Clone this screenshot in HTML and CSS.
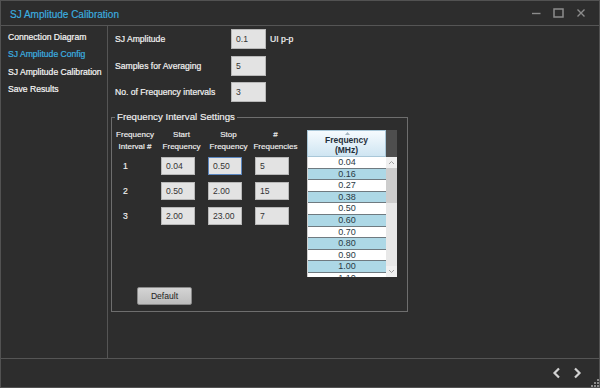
FILE: index.html
```html
<!DOCTYPE html>
<html>
<head>
<meta charset="utf-8">
<link rel="stylesheet" href="styles.css">
</head>
<body>
<div class="window">
  <header class="titlebar">
    <span class="title">SJ Amplitude Calibration</span>
    <div class="controls">
      <svg class="ctl" width="10" height="10" viewBox="0 0 10 10"><path d="M1 5.5H9.5" stroke="#8c8c8c" stroke-width="1.4"/></svg>
      <svg class="ctl" width="11" height="10" viewBox="0 0 11 10"><rect x="1" y="1" width="9" height="8" fill="none" stroke="#8c8c8c" stroke-width="1.5"/></svg>
      <svg class="ctl" width="10" height="10" viewBox="0 0 10 10"><path d="M1.5 1.5L8.5 8.5M8.5 1.5L1.5 8.5" stroke="#8c8c8c" stroke-width="1.4"/></svg>
    </div>
  </header>
  <div class="main">
    <nav class="nav">
      <div class="nav-item">Connection Diagram</div>
      <div class="nav-item active">SJ Amplitude Config</div>
      <div class="nav-item">SJ Amplitude Calibration</div>
      <div class="nav-item">Save Results</div>
    </nav>
    <section class="content">
      <div class="form-rows">
        <div class="form-row"><span class="label">SJ Amplitude</span><span class="field">0.1</span><span class="unit">UI p-p</span></div>
        <div class="form-row"><span class="label">Samples for Averaging</span><span class="field">5</span></div>
        <div class="form-row"><span class="label">No. of Frequency intervals</span><span class="field">3</span></div>
      </div>
      <fieldset class="group">
        <legend class="legend">Frequency Interval Settings</legend>
        <div class="group-body">
          <div class="intervals">
            <div class="ih">Frequency<br>Interval #</div>
            <div class="ih">Start<br>Frequency</div>
            <div class="ih">Stop<br>Frequency</div>
            <div class="ih">#<br>Frequencies</div>

            <div class="inum">1</div>
            <div class="icell"><span class="field small">0.04</span></div>
            <div class="icell"><span class="field small focus">0.50</span></div>
            <div class="icell"><span class="field small">5</span></div>

            <div class="inum">2</div>
            <div class="icell"><span class="field small">0.50</span></div>
            <div class="icell"><span class="field small">2.00</span></div>
            <div class="icell"><span class="field small">15</span></div>

            <div class="inum">3</div>
            <div class="icell"><span class="field small">2.00</span></div>
            <div class="icell"><span class="field small">23.00</span></div>
            <div class="icell"><span class="field small">7</span></div>
          </div>
          <div class="freq-table">
            <div class="th">
              <svg class="sort" width="5" height="3" viewBox="0 0 5 3"><path d="M0 3L2.5 0L5 3Z" fill="#a6b6c0"/></svg>
              Frequency<br>(MHz)
            </div>
            <div class="th-gap"></div>
            <div class="tbody">
              <div class="tr">0.04</div>
              <div class="tr alt">0.16</div>
              <div class="tr">0.27</div>
              <div class="tr alt">0.38</div>
              <div class="tr">0.50</div>
              <div class="tr alt">0.60</div>
              <div class="tr">0.70</div>
              <div class="tr alt">0.80</div>
              <div class="tr">0.90</div>
              <div class="tr alt">1.00</div>
              <div class="tr">1.10</div>
            </div>
            <div class="scrollbar">
              <div class="sb-btn"><svg width="7" height="5" viewBox="0 0 7 5"><path d="M1 4L3.5 1.5L6 4" fill="none" stroke="#a0a0a0" stroke-width="1"/></svg></div>
              <div class="sb-thumb"></div>
              <div class="sb-track"></div>
              <div class="sb-btn"><svg width="7" height="5" viewBox="0 0 7 5"><path d="M1 1L3.5 3.5L6 1" fill="none" stroke="#a0a0a0" stroke-width="1"/></svg></div>
            </div>
          </div>
        </div>
        <button class="btn">Default</button>
      </fieldset>
    </section>
  </div>
  <footer class="footer">
    <svg width="9" height="12" viewBox="0 0 9 12"><path d="M7 1.5L2.5 6L7 10.5" fill="none" stroke="#d2d2d2" stroke-width="2.2"/></svg>
    <svg width="9" height="12" viewBox="0 0 9 12"><path d="M2 1.5L6.5 6L2 10.5" fill="none" stroke="#d2d2d2" stroke-width="2.2"/></svg>
    <svg class="grip" width="9" height="9" viewBox="0 0 9 9">
      <rect x="7" y="1" width="2" height="2" fill="#8a8a8a"/>
      <rect x="4" y="4" width="2" height="2" fill="#8a8a8a"/><rect x="7" y="4" width="2" height="2" fill="#8a8a8a"/>
      <rect x="1" y="7" width="2" height="2" fill="#8a8a8a"/><rect x="4" y="7" width="2" height="2" fill="#8a8a8a"/><rect x="7" y="7" width="2" height="2" fill="#8a8a8a"/>
    </svg>
  </footer>
</div>
</body>
</html>
```
FILE: styles.css
```css
* { box-sizing: border-box; }
html, body { margin: 0; padding: 0; }
body {
  background: #2d2d2d;
  font-family: "Liberation Sans", Arial, sans-serif;
  color: #f2f2f2;
}
.window {
  width: 600px;
  height: 388px;
  border: 1px solid #525252;
  background: #2d2d2d;
  display: flex;
  flex-direction: column;
  position: relative;
}
.titlebar {
  height: 25px;
  flex: none;
  border-bottom: 1px solid #555;
  display: flex;
  align-items: center;
  justify-content: space-between;
  padding: 0 13px 0 9px;
}
.title {
  color: #3cb0e0;
  font-size: 10px;
  padding-top: 2px;
  -webkit-text-stroke: 0.15px #3cb0e0;
}
.controls {
  display: flex;
  align-items: center;
  gap: 12px;
}
.ctl { display: block; }
.main {
  flex: 1;
  display: flex;
  min-height: 0;
}
.nav {
  width: 107px;
  flex: none;
  border-right: 1px solid #555;
  padding: 3px 0 0 7px;
  font-size: 8.6px;
}
.nav-item {
  line-height: 17.4px;
  color: #f6f6f6;
  white-space: nowrap;
  -webkit-text-stroke: 0.2px currentColor;
}
.nav-item.active { color: #3cb0e0; }
.content {
  flex: 1;
  padding: 3px 0 0 3px;
  font-size: 8.6px;
}
.form-rows {
  display: flex;
  flex-direction: column;
  row-gap: 6.5px;
  padding-left: 4px;
  -webkit-text-stroke: 0.2px currentColor;
}
.form-row {
  display: flex;
  align-items: center;
  height: 20px;
}
.label {
  width: 116px;
  flex: none;
}
.unit { margin-left: 4px; }
.field {
  display: inline-block;
  width: 35px;
  height: 20px;
  line-height: 18px;
  background: #e3e3e3;
  border: 1px solid #b8b8b8;
  color: #333;
  padding-left: 4px;
  font-size: 8.6px;
  -webkit-text-stroke: 0;
}
.field.small {
  width: 34px;
  height: 18px;
  line-height: 16px;
}
.field.focus { border-color: #5b86bf; }
.group {
  margin: 9px 0 0 0;
  width: 297px;
  border: 1px solid #6e6e6e;
  padding: 0 0 6px 0;
  min-width: 0;
}
.legend {
  margin-left: 3px;
  padding: 0 2px;
  font-size: 9.7px;
  line-height: 12px;
  color: #f2f2f2;
  -webkit-text-stroke: 0.15px currentColor;
}
.group-body {
  display: flex;
  gap: 8px;
  margin-top: 7px;
}
.intervals {
  display: grid;
  grid-template-columns: 46px 47px 47px 47px;
  grid-template-rows: 20px 18px 18px 18px;
  row-gap: 7px;
  align-content: start;
  font-size: 8px;
  -webkit-text-stroke: 0.15px currentColor;
}
.ih {
  text-align: center;
  line-height: 11.5px;
  margin-top: -1px;
  white-space: nowrap;
}
.inum {
  padding-left: 11px;
  line-height: 18px;
  font-size: 8.6px;
}
.icell { padding-left: 3px; }
.freq-table {
  display: grid;
  grid-template-columns: 79px 11px;
  grid-template-rows: 27px 120px;
  width: 90px;
}
.th {
  position: relative;
  background: linear-gradient(#f6fbfe, #cfe5f2);
  border: 1px solid #a9c7d8;
  color: #1f2f3a;
  font-weight: bold;
  font-size: 8.5px;
  line-height: 10px;
  text-align: center;
  padding-top: 4px;
}
.sort {
  position: absolute;
  left: 37px;
  top: 1px;
  display: block;
}
.th-gap { background: #4e4e4e; }
.tbody {
  overflow: hidden;
  background: #fff;
  border-left: 1px solid #d0d0d0;
}
.tr {
  height: 11.6px;
  line-height: 10.6px;
  border-bottom: 1px solid #6f7a80;
  background: #fff;
  color: #2a3a44;
  text-align: center;
  font-size: 9px;
}
.tr.alt { background: #add8e6; }
.scrollbar {
  display: flex;
  flex-direction: column;
  background: #e8e8e8;
}
.sb-btn {
  height: 11px;
  display: flex;
  align-items: center;
  justify-content: center;
  background: #f0f0f0;
}
.sb-thumb {
  height: 35px;
  background: #cdcdcd;
}
.sb-track { flex: 1; background: #e8e8e8; }
.btn {
  margin: 10px 0 0 25px;
  width: 55px;
  height: 18px;
  background: linear-gradient(#d4d4d4, #bdbdbd);
  border: 1px solid #8a8a8a;
  border-radius: 2px;
  color: #222;
  font-family: "Liberation Sans", Arial, sans-serif;
  font-size: 8.6px;
  padding: 0;
  display: block;
}
.footer {
  height: 29px;
  flex: none;
  border-top: 1px solid #555;
  display: flex;
  align-items: center;
  justify-content: flex-end;
  gap: 12px;
  padding: 0 17px 0 0;
}
.footer svg { display: block; }
.grip {
  position: absolute;
  right: 0;
  bottom: 0;
}
```
